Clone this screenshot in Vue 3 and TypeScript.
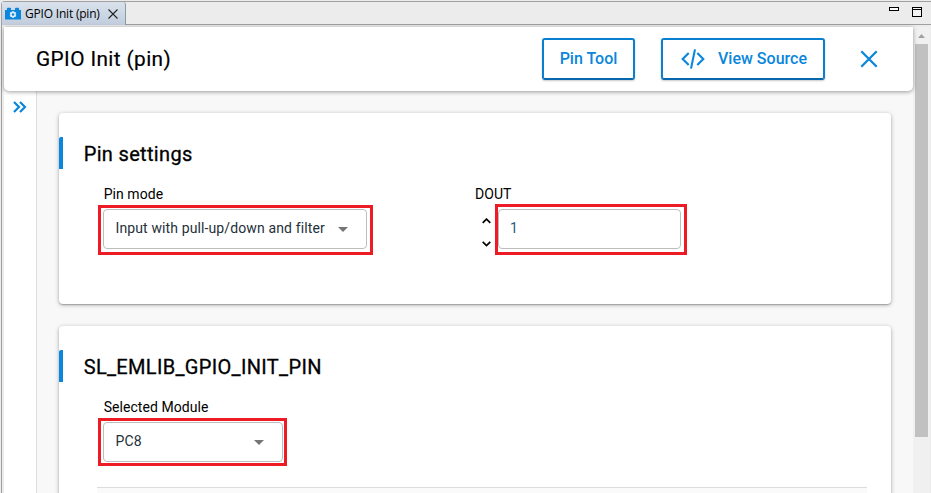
<script setup lang="ts">
import { ref } from 'vue'

const title = 'GPIO Init (pin)'
const pinMode = ref('Input with pull-up/down and filter')
const dout = ref(1)
const selectedModule = ref('PC8')

function step(delta: number): void {
  dout.value = Math.min(1, Math.max(0, dout.value + delta))
}
</script>

<template>
  <div class="window">
    <header class="tabbar">
      <div class="tab">
        <svg class="tab-icon" width="16" height="13" viewBox="0 0 16 13">
          <path d="M0 3h2V1.500q0-.8.8-.8h2.400q.8 0 .8.8V3h4V1.500q0-.8.8-.8h2.400q.8 0 .8.8V3h2v9.500H0z" fill="#0a86dc" />
          <circle cx="8" cy="7.500" r="2.100" fill="none" stroke="#dcecf7" stroke-width="1.700" />
          <path d="M8 3.900v1.200M8 9.900v1.200M4.900 5.700l1 .6M10.100 8.700l1 .6M4.900 9.300l1-.6M10.100 6.300l1-.6" stroke="#dcecf7" stroke-width="1.300" />
        </svg>
        <span class="tab-label">{{ title }}</span>
        <svg class="tab-close" width="10" height="10" viewBox="0 0 10 10">
          <path d="M.5.5l9 9M9.500.5l-9 9" stroke="#222" stroke-width="1.100" />
        </svg>
      </div>
      <div class="strip">
        <svg width="34" height="12" viewBox="0 0 34 12" fill="none" stroke="#000">
          <rect x=".5" y="1.500" width="9" height="3" fill="#fff" />
          <rect x="23.500" y="1.500" width="9" height="9" fill="#f4f4f4" />
          <path d="M24 3.500h8" />
        </svg>
      </div>
    </header>

    <div class="view">
      <main class="page">
        <div class="topbar">
          <h1>{{ title }}</h1>
          <button class="btn pin-tool">Pin Tool</button>
          <button class="btn source">
            <svg width="24" height="20" viewBox="0 0 24 20" fill="none" stroke="#0a86dc" stroke-width="2.100">
              <path d="M7.700 4L1.700 10l6 6M16.300 4l6 6-6 6M14 .4l-4 19.200" />
            </svg>
            <span>View Source</span>
          </button>
          <button class="close">
            <svg width="18" height="18" viewBox="0 0 18 18">
              <path d="M1.300 1.300l15.400 15.400M16.700 1.300L1.300 16.700" stroke="#0a86dc" stroke-width="2.300" />
            </svg>
          </button>
        </div>

        <div class="body">
          <aside class="rail">
            <svg width="14" height="12" viewBox="0 0 14 12" fill="none" stroke="#0a86dc" stroke-width="2.200">
              <path d="M1 1l5 5-5 5M7 1l5 5-5 5" />
            </svg>
          </aside>

          <div class="content">
            <section class="card first">
              <h2>Pin settings</h2>
              <div class="fields">
                <div class="field">
                  <label>Pin mode</label>
                  <div class="control select wide">
                    <span>{{ pinMode }}</span>
                    <i class="caret"></i>
                    <div class="highlight hl-mode"></div>
                  </div>
                </div>
                <div class="field">
                  <label class="dout-label">DOUT</label>
                  <div class="number">
                    <div class="stepper">
                      <button @click="step(1)">
                        <svg width="9" height="6" viewBox="0 0 9 6"><path d="M.7 4.800l3.800-3.700 3.800 3.700" fill="none" stroke="#000" stroke-width="1.700" /></svg>
                      </button>
                      <button @click="step(-1)">
                        <svg width="9" height="6" viewBox="0 0 9 6"><path d="M.7.8l3.800 3.700L8.300.8" fill="none" stroke="#000" stroke-width="1.700" /></svg>
                      </button>
                    </div>
                    <div class="control value">
                      <span>{{ dout }}</span>
                      <div class="highlight hl-dout"></div>
                    </div>
                  </div>
                </div>
              </div>
            </section>

            <section class="card second">
              <h2>SL_EMLIB_GPIO_INIT_PIN</h2>
              <div class="fields">
                <div class="field">
                  <label>Selected Module</label>
                  <div class="control select narrow">
                    <span>{{ selectedModule }}</span>
                    <i class="caret"></i>
                    <div class="highlight hl-module"></div>
                  </div>
                </div>
              </div>
              <div class="subpanel"></div>
            </section>
          </div>
        </div>
      </main>
      <div class="scrollbar">
        <svg width="7" height="4" viewBox="0 0 7 4"><path d="M0 4L3.500 0 7 4z" fill="#a0a0a0" /></svg>
        <div class="thumb"></div>
      </div>
    </div>
  </div>
</template>

<style>
body {
  overflow: hidden;
  background: #ececec;
}
</style>

<style scoped>
* {
  box-sizing: border-box;
}
.window {
  width: 931px;
  height: 493px;
  overflow: hidden;
  padding: 1px 0 0 1px;
  background: #ececec;
  font-family: Roboto, "Liberation Sans", sans-serif;
  color: #000;
}
.tabbar {
  display: flex;
  height: 24px;
  border-top: 1px solid #a0a0a0;
  border-left: 1px solid #a0a0a0;
  border-top-left-radius: 4px;
}
.tab {
  display: flex;
  align-items: center;
  width: 124px;
  padding-left: 3px;
  border-right: 1px solid #8e99a8;
  border-top-right-radius: 3px;
  background: linear-gradient(#d9e2ec, #c1cddd);
}
.tab-label {
  width: 78px;
  margin-left: 4px;
  font: 12px/20px "Open Sans", "Noto Sans", sans-serif;
  letter-spacing: -0.2px;
  white-space: nowrap;
}
.tab-close {
  margin-left: 5px;
}
.strip {
  flex: 1;
  display: flex;
  justify-content: flex-end;
  padding: 4px 8px 0 0;
  border-bottom: 1px solid #a0a0a0;
}
.view {
  display: flex;
  height: 468px;
  padding: 2px 1px 0 2px;
  border-left: 1px solid #a0a0a0;
}
.page {
  width: 909px;
  background: #f8f8f8;
}
.topbar {
  position: relative;
  display: flex;
  align-items: center;
  height: 64px;
  padding: 0 35px 0 32px;
  border-radius: 0 0 5px 5px;
  background: #fff;
  box-shadow: 0 1px 4px rgba(0, 0, 0, 0.38);
}
h1,
h2 {
  margin: 0;
  font-weight: 400;
  font-size: 20px;
  line-height: 24px;
  white-space: nowrap;
}
h1 {
  flex: 1;
  font-size: 20.8px;
  letter-spacing: 0.4px;
  -webkit-text-stroke: 0.2px #000;
}
button {
  padding: 0;
  border: 0;
  background: none;
  font-family: inherit;
}
.btn {
  display: flex;
  align-items: center;
  justify-content: center;
  height: 42px;
  padding-bottom: 1px;
  border: 2px solid #0a7fd0;
  border-bottom-color: #0868ae;
  border-radius: 3px;
  background: #fff;
  box-shadow: 0 1px 2px rgba(0, 0, 0, 0.22);
  color: #0a86dc;
  font-weight: 500;
  font-size: 16px;
  white-space: nowrap;
}
.pin-tool {
  width: 93px;
  margin-right: 26px;
}
.source {
  gap: 13px;
  width: 164px;
  padding-left: 2px;
}
.source svg {
  margin-top: 1px;
}
.close {
  display: flex;
  margin-left: 35px;
}
.body {
  display: flex;
  height: 402px;
}
.rail {
  width: 33px;
  padding: 10px 0 0 9px;
  border-right: 1px solid #dedede;
  background: #fff;
}
.rail svg {
  display: block;
}
.content {
  display: flex;
  flex-direction: column;
  gap: 22px;
  padding: 22px 22px 0;
}
.card {
  width: 832px;
  padding-top: 24px;
  flex-shrink: 0;
  border-radius: 4px;
  background: #fff;
  box-shadow: 0 1px 1px rgba(0, 0, 0, 0.2), 0 1px 4px rgba(0, 0, 0, 0.3);
}
.first {
  height: 191px;
}
.second {
  height: 260px;
}
h2 {
  height: 32px;
  padding-left: 20.7px;
  border-left: 4px solid #0a86dc;
  border-top-left-radius: 2px;
  line-height: 34px;
  -webkit-text-stroke: 0.3px #000;
}
.first h2 {
  letter-spacing: 0.33px;
}
.second h2 {
  letter-spacing: 0.33px;
}
.fields {
  display: flex;
  padding: 15px 0 0 44px;
}
.field {
  width: 372px;
}
label {
  display: block;
  height: 25px;
  padding-left: 0.7px;
  font-size: 14px;
  line-height: 20px;
  letter-spacing: 0.05px;
}
.dout-label {
  padding-left: 0;
}
.control {
  position: relative;
  display: flex;
  align-items: center;
  height: 40px;
  padding: 0 18px 2px 11.500px;
  border: 1px solid #bdbdbd;
  border-radius: 4px;
  color: #24303a;
  font-size: 14px;
  letter-spacing: 0.12px;
  white-space: nowrap;
}
.select {
  justify-content: space-between;
}
.wide {
  width: 264px;
}
.narrow {
  width: 180px;
}
.caret {
  margin-top: 2px;
  border: 5px solid transparent;
  border-top-color: #757575;
  border-bottom: 0;
}
.number {
  display: flex;
}
.stepper {
  display: flex;
  flex-direction: column;
  gap: 17px;
  width: 23px;
  padding: 9px 0 0 7px;
}
.stepper button {
  display: flex;
}
.value {
  width: 183px;
  padding-left: 11px;
}
.value span {
  color: #285a82;
}
.highlight {
  position: absolute;
  border: 3px solid #ed1c24;
  pointer-events: none;
}
.hl-mode {
  inset: -5px -7px -7px -6px;
}
.hl-dout {
  inset: -6px -7px -7px -4px;
}
.hl-module {
  inset: -5px -5px -5px -6px;
}
.subpanel {
  height: 40px;
  margin: 25px 24px 0 38px;
  border-top: 1px solid #dcdcdc;
  background: #fafafa;
}
.scrollbar {
  display: flex;
  flex-direction: column;
  align-items: center;
  width: 17px;
  padding-top: 7px;
  background: #f0f0f0;
}
.thumb {
  width: 13px;
  height: 393px;
  margin-top: 6px;
  background: #c1c1c1;
}
</style>
